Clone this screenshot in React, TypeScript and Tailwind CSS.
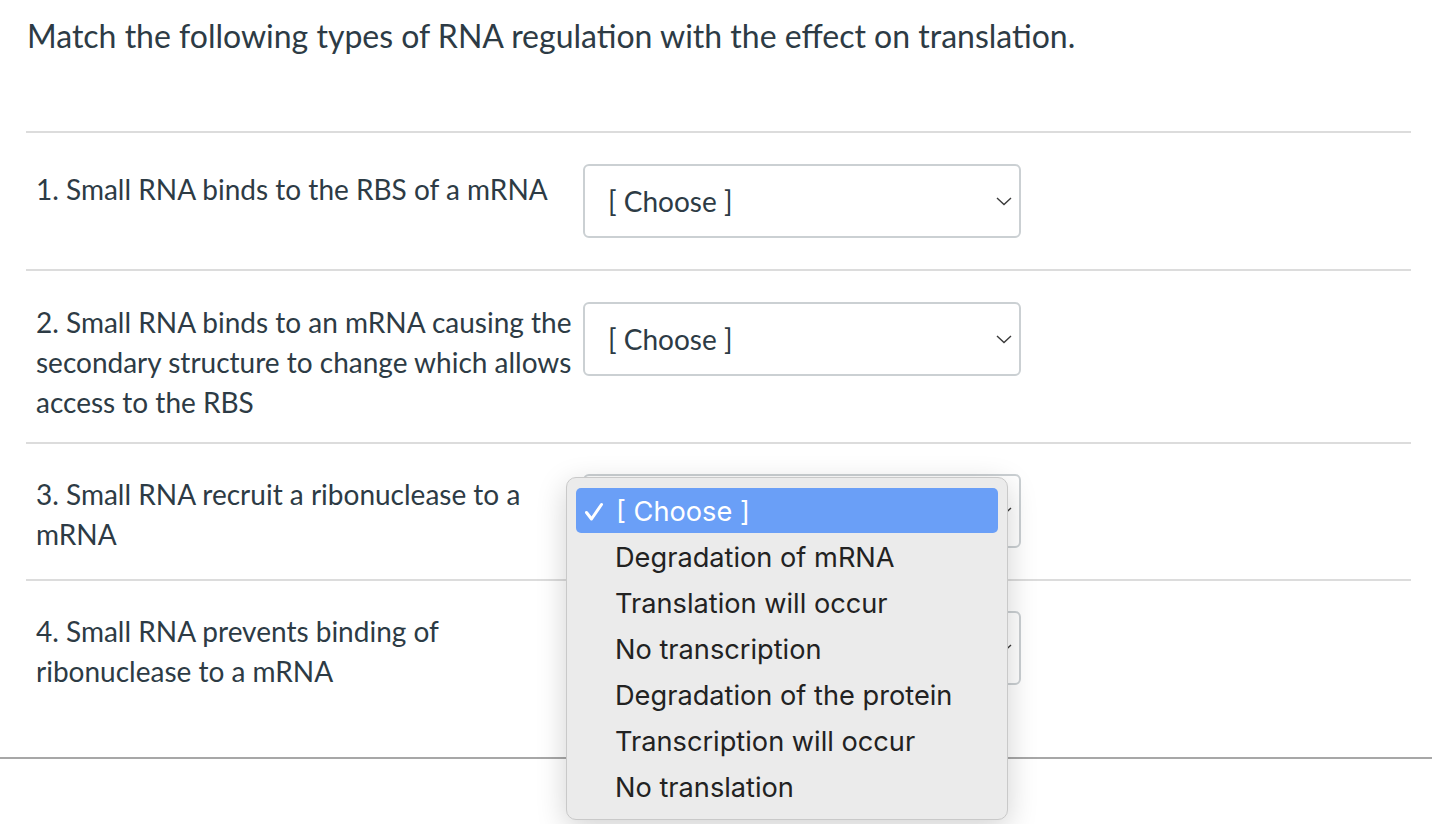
import React from "react";

interface Question {
    id: number
    text: string
    textOffset: string
    covered: boolean
}

// questions 3 and 4 sit under the open popup, so their select label is not drawn
const questions: Question[] = [
    { id: 1, text: "1. Small RNA binds to the RBS of a mRNA", textOffset: "mt-[5px]", covered: false },
    { id: 2, text: "2. Small RNA binds to an mRNA causing the secondary structure to change which allows access to the RBS", textOffset: "mt-0", covered: false },
    { id: 3, text: "3. Small RNA recruit a ribonuclease to a mRNA", textOffset: "mt-0", covered: true },
    { id: 4, text: "4. Small RNA prevents binding of ribonuclease to a mRNA", textOffset: "mt-0", covered: true },
];

const options = [
    "Degradation of mRNA",
    "Translation will occur",
    "No transcription",
    "Degradation of the protein",
    "Transcription will occur",
    "No translation",
];

const Chevron = () => (
    <svg width="16" height="9" viewBox="0 0 16 9" fill="none">
        <polyline points="1,1 8,7.5 15,1" stroke="#3a3a3a" strokeWidth="1.4" />
    </svg>
);

const FakeSelect = ({ covered }: { covered: boolean }) => (
    <div className="ml-[7px] flex h-[74px] w-[438px] shrink-0 items-center justify-between rounded-[6px] border-2 border-[#cbd0d3] bg-white pl-[23px] pr-[7px]">
        <span className="text-[28px] leading-none text-[#2d3b45]">{covered ? "" : "[ Choose ]"}</span>
        <Chevron />
    </div>
);

const App = () => {
    return (
        <div className="relative min-h-[824px] overflow-hidden bg-white font-['Lato',sans-serif] text-[#2d3b45]">
            <div className="pl-[26px] pr-[21px]">
                <h1 className="pl-px pt-[13px] text-[32px] font-normal leading-[45px]">
                    Match the following types of RNA regulation with the effect on translation.
                </h1>

                <div className="mt-[73px]">
                    {questions.map((q, i) => (
                        <div
                            key={q.id}
                            className={`flex items-start border-t-2 border-[#dcdcdc] pl-[10px] pb-[20px] ${i === 0 || i === 1 ? "pt-[31px]" : "pt-[30px]"}`}
                        >
                            <div className={`w-[540px] shrink-0 text-[28px] leading-[40px] ${q.textOffset}`}>
                                {q.text}
                            </div>
                            <div className="mb-[11px]">
                                <FakeSelect covered={q.covered} />
                            </div>
                        </div>
                    ))}
                </div>
            </div>

            <div className="mt-[41px] h-[2px] w-full bg-[#a7a7a7]" />

            {/* native popup menu, open over question 3 */}
            <div className="absolute left-[566px] top-[477px] h-[343px] w-[442px] rounded-[10px] border border-[#c9c9c9] bg-[#ebebeb] px-[9px] pt-[10px] font-['Inter',sans-serif] shadow-[0_8px_30px_rgba(0,0,0,0.18)]">
                <div className="relative flex h-[45px] items-center rounded-[5px] bg-[#6a9ff7] pl-[40px] pt-[4px] text-[27.2px] text-white">
                    <svg className="absolute left-[8px] top-[14px]" width="20" height="20" viewBox="0 0 20 20" fill="none">
                        <polyline points="2.5,10.5 7.5,17 17.5,2.5" stroke="white" strokeWidth="3" strokeLinecap="round" strokeLinejoin="round" />
                    </svg>
                    [ Choose ]
                </div>
                {options.map((o) => (
                    <div key={o} className="flex h-[46px] items-center pl-[39px] pt-[4px] text-[27.2px] text-[#222]">
                        {o}
                    </div>
                ))}
            </div>
        </div>
    );
};

export default App;
